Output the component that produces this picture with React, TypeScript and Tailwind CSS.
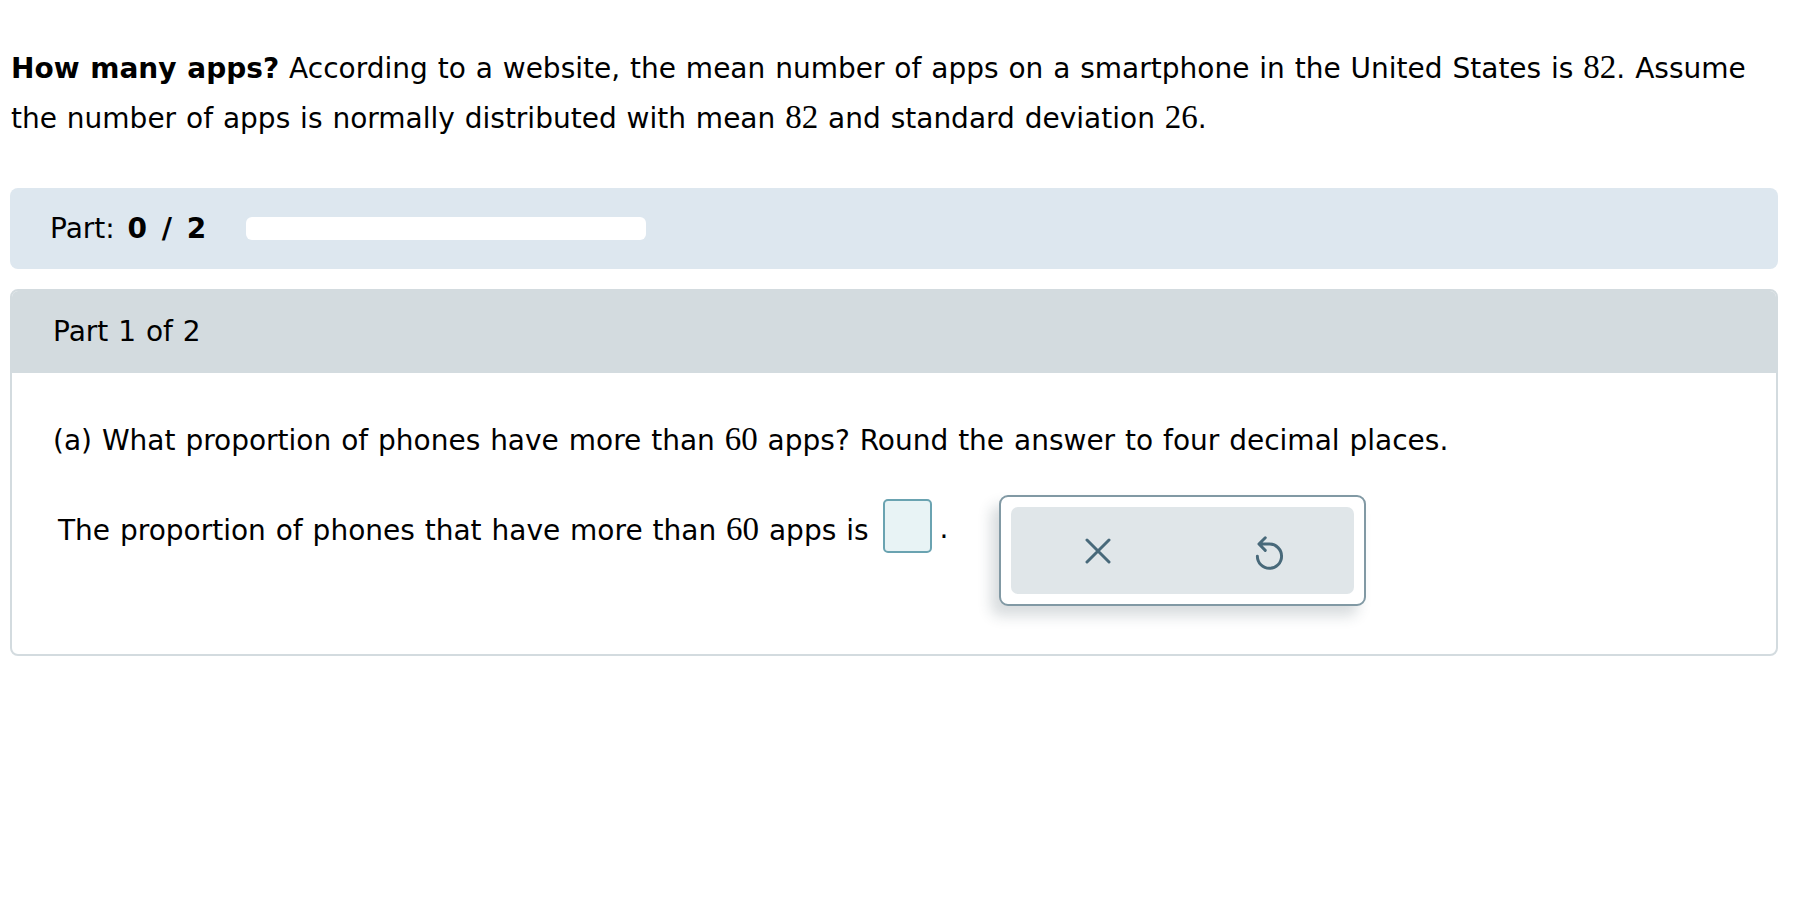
import React from "react";

const Num = ({ children }: { children: React.ReactNode }) => (
  <span className="font-['Liberation_Serif','Times_New_Roman',serif] text-[33px]">{children}</span>
);

export default function App() {
  return (
    <div className="w-[1810px] h-[918px] bg-white text-black font-['DejaVu_Sans','Verdana',sans-serif] text-[28px] leading-[48px] [word-spacing:1px]">
      <div className="pl-[10px] pr-[32px] pt-[43px]">
        <p className="pl-[1px] whitespace-nowrap">
          <b>How many apps?</b> According to a website, the mean number of apps on a smartphone in the United States is <Num>82</Num>. Assume
          <br />
          the number of apps is normally distributed with mean <Num>82</Num> and standard deviation <Num>26</Num>.
        </p>

        <div className="mt-[45px] h-[81px] rounded-[8px] bg-[#dde7ef] flex items-center pl-[40px]">
          <span className="w-[196px] shrink-0">
            Part: <b className="[word-spacing:5px] ml-[3px]">0 / 2</b>
          </span>
          <div className="w-[400px] h-[23px] rounded-[6px] bg-white" />
        </div>

        <div className="mt-[20px] rounded-[8px] border-2 border-[#d3dbdf] overflow-hidden">
          <div className="h-[82px] bg-[#d3dbdf] flex items-center pl-[41px]">Part 1 of 2</div>
          <div className="pt-[42px] pl-[41px] pb-[48px]">
            <p>
              (a) What proportion of phones have more than <Num>60</Num> apps? Round the answer to four decimal places.
            </p>
            <div className="mt-[30px] flex items-start pl-[5px]">
              <span className="mt-[10px]">
                The proportion of phones that have more than <Num>60</Num> apps is
              </span>
              <div className="ml-[14px] mt-[4px] w-[49px] h-[54px] rounded-[5px] border-2 border-[#6aa3b1] bg-[#e8f3f5]" />
              <span className="mt-[10px] ml-[8px]">.</span>
              <div className="ml-[51px] w-[367px] h-[111px] rounded-[9px] border-2 border-[#8199a4] bg-white p-[10px] shadow-[-8px_10px_14px_rgba(40,60,70,0.18)]">
                <div className="h-full rounded-[7px] bg-[#e0e6e9] flex items-center">
                  <div className="w-[170px] flex justify-center">
                    <svg width="26" height="26" viewBox="0 0 26 26" className="ml-[4px]">
                      <path d="M2 2 L24 24 M24 2 L2 24" stroke="#48697a" strokeWidth="3" strokeLinecap="round" fill="none" />
                    </svg>
                  </div>
                  <div className="w-[170px] flex justify-center">
                    <svg width="34" height="40" viewBox="0 0 32 38" className="ml-[8px] mt-[4px]">
                      <path
                        d="M4 22 A11.5 11.5 0 1 0 15.5 10.5 L6 10.5 M11.5 4.5 L5.5 10.5 L11.5 16.5"
                        stroke="#48697a"
                        strokeWidth="2.8"
                        strokeLinecap="round"
                        strokeLinejoin="round"
                        fill="none"
                      />
                    </svg>
                  </div>
                </div>
              </div>
            </div>
          </div>
        </div>
      </div>
    </div>
  );
}
